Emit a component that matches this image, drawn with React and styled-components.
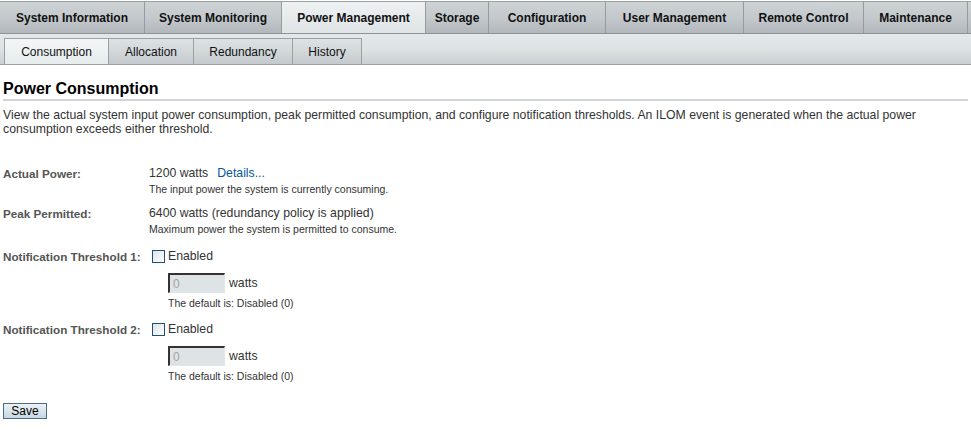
import React from 'react';
import styled, { createGlobalStyle } from 'styled-components';

const GlobalStyle = createGlobalStyle`
  body {
    margin: 0;
    background: #fff;
    font-family: "Liberation Sans", Arial, sans-serif;
    color: #333;
  }
`;

const MAIN_TABS = [
  { label: 'System Information', width: 145 },
  { label: 'System Monitoring', width: 137 },
  { label: 'Power Management', width: 144, active: true },
  { label: 'Storage', width: 63 },
  { label: 'Configuration', width: 117 },
  { label: 'User Management', width: 138 },
  { label: 'Remote Control', width: 120 },
  { label: 'Maintenance', width: 104 },
];

const SUB_TABS = [
  { label: 'Consumption', width: 105, active: true },
  { label: 'Allocation', width: 86 },
  { label: 'Redundancy', width: 100 },
  { label: 'History', width: 70 },
];

const MainBar = styled.div`
  display: flex;
  height: 31px;
  border-top: 1px solid #9aa1a5;
  border-bottom: 1px solid #8d9498;
  margin-top: 1px;
  background: linear-gradient(#cfd4d7, #b3b9bd);
`;

const MainTab = styled.div`
  display: flex;
  align-items: center;
  justify-content: center;
  box-sizing: border-box;
  width: ${p => p.$width}px;
  border-right: 1px solid #959ca0;
  font-size: 12px;
  font-weight: bold;
  color: #111;
  background: ${p =>
    p.$active
      ? 'linear-gradient(#eef1f2, #dfe4e6)'
      : 'linear-gradient(#cdd2d5 0%, #c3c9cc 50%, #b1b7bb 100%)'};
`;

const SubBar = styled.div`
  display: flex;
  align-items: flex-end;
  height: 30px;
  padding-left: 4px;
  border-bottom: 1px solid #9aa1a5;
  background: linear-gradient(#e3e8ea 0%, #dde2e5 50%, #c9cfd2 100%);
`;

const SubTab = styled.div`
  display: flex;
  align-items: center;
  justify-content: center;
  box-sizing: border-box;
  width: ${p => p.$width}px;
  height: 26px;
  border: 1px solid #9aa1a5;
  border-bottom: none;
  font-size: 12px;
  color: #111;
  background: ${p =>
    p.$active
      ? 'linear-gradient(#f3f6f6, #e6ecec)'
      : 'linear-gradient(#dde2e4 0%, #d2d7da 50%, #c3c9cc 100%)'};

  & + & {
    margin-left: -1px;
  }
`;

const Content = styled.div`
  padding: 0 3px;
`;

const Title = styled.h1`
  margin: 15px 0 0;
  padding-bottom: 1px;
  font-size: 16px;
  line-height: 18px;
  font-weight: bold;
  color: #000;
  border-bottom: 2px solid #d1d4d8;
`;

const Intro = styled.p`
  margin: 7px 0 0;
  font-size: 12.25px;
  line-height: 14px;
  color: #333;
`;

const Form = styled.div`
  display: flex;
  flex-direction: column;
  margin-top: 30px;
`;

const Row = styled.div`
  display: flex;
  margin-top: ${p => p.$gap || 0}px;
`;

const Label = styled.div`
  flex: 0 0 146px;
  font-size: 11.7px;
  font-weight: bold;
  color: #555;
  line-height: 15px;
`;

const Field = styled.div`
  display: flex;
  flex-direction: column;
  align-items: flex-start;
`;

const Value = styled.div`
  font-size: 12.25px;
  line-height: 15px;
  color: #333;
`;

const Link = styled.a`
  color: #035899;
  text-decoration: none;
  margin-left: 9px;
`;

const Hint = styled.div`
  font-size: 10.5px;
  line-height: 14px;
  margin-top: 1px;
  color: #333;
`;

const CheckRow = styled.label`
  display: flex;
  align-items: center;
  gap: 3px;
  margin-left: 3px;
  font-size: 12.25px;
  line-height: 15px;
  color: #333;
`;

const Box = styled.span`
  display: inline-block;
  width: 11px;
  height: 11px;
  border: 1px solid #1f4f7c;
  background: linear-gradient(135deg, #dfe3e6, #fff);
`;

const InputRow = styled.div`
  display: flex;
  align-items: center;
  gap: 4px;
  margin-top: 9px;
  margin-left: 19px;
  font-size: 12.25px;
`;

const NumInput = styled.div`
  box-sizing: border-box;
  width: 57px;
  height: 20px;
  padding: 2px 3px;
  border-top: 2px solid #333;
  border-left: 2px solid #333;
  border-right: 1px solid #e0e5e7;
  border-bottom: 1px solid #e0e5e7;
  background: #dee3e5;
  color: #a0a4a6;
  font-size: 12px;
`;

const Default = styled(Hint)`
  margin-left: 19px;
  margin-top: 3px;
`;

const SaveButton = styled.button`
  margin-top: 20px;
  width: 44px;
  height: 16px;
  padding: 0;
  border: 1px solid #4a6d8a;
  background: linear-gradient(#ecf2f6, #c8d7e2);
  font-family: "Liberation Sans", Arial, sans-serif;
  font-size: 12px;
  color: #000;
`;

const Threshold = ({ n, gap }) => (
  <Row $gap={gap}>
    <Label>Notification Threshold {n}:</Label>
    <Field>
      <CheckRow>
        <Box />
        Enabled
      </CheckRow>
      <InputRow>
        <NumInput>0</NumInput>
        watts
      </InputRow>
      <Default>The default is: Disabled (0)</Default>
    </Field>
  </Row>
);

export default function App() {
  return (
    <>
      <GlobalStyle />
      <MainBar>
        {MAIN_TABS.map(t => (
          <MainTab key={t.label} $width={t.width} $active={t.active}>
            {t.label}
          </MainTab>
        ))}
      </MainBar>
      <SubBar>
        {SUB_TABS.map(t => (
          <SubTab key={t.label} $width={t.width} $active={t.active}>
            {t.label}
          </SubTab>
        ))}
      </SubBar>
      <Content>
        <Title>Power Consumption</Title>
        <Intro>
          View the actual system input power consumption, peak permitted consumption, and configure
          notification thresholds. An ILOM event is generated when the actual power consumption
          exceeds either threshold.
        </Intro>
        <Form>
          <Row>
            <Label>Actual Power:</Label>
            <Field>
              <Value>
                1200 watts<Link href="#">Details...</Link>
              </Value>
              <Hint>The input power the system is currently consuming.</Hint>
            </Field>
          </Row>
          <Row $gap={10}>
            <Label>Peak Permitted:</Label>
            <Field>
              <Value>6400 watts (redundancy policy is applied)</Value>
              <Hint>Maximum power the system is permitted to consume.</Hint>
            </Field>
          </Row>
          <Threshold n={1} gap={13} />
          <Threshold n={2} gap={12} />
        </Form>
        <SaveButton>Save</SaveButton>
      </Content>
    </>
  );
}
